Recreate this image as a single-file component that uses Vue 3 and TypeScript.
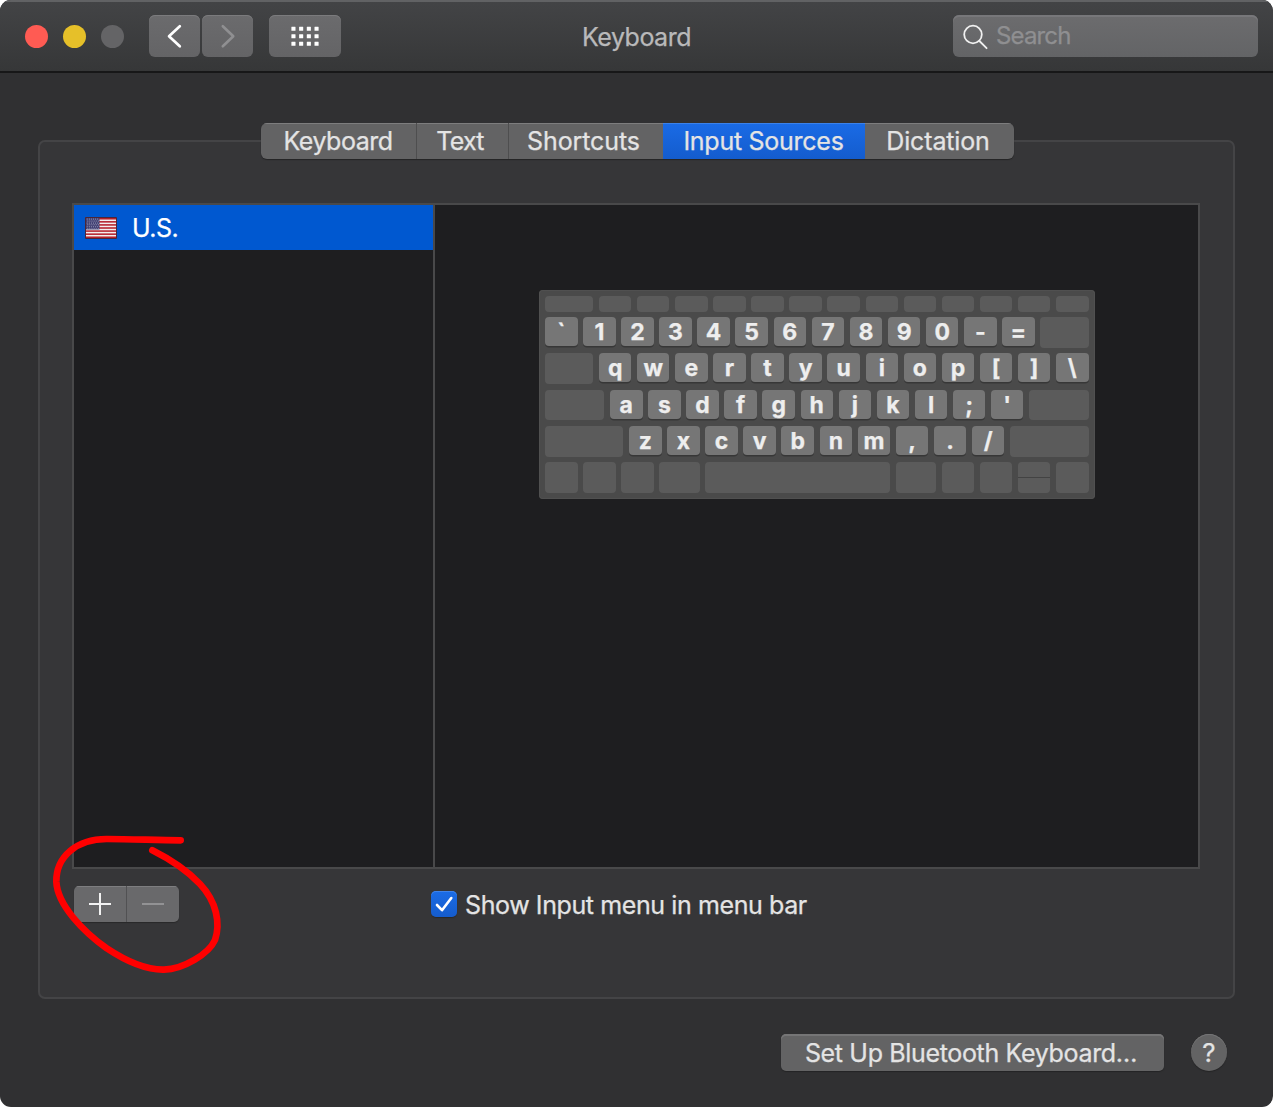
<script setup lang="ts">
interface Tab { label: string; width: number; spacing: number; active?: boolean }
interface Key { label?: string; width?: number; fill?: boolean; split?: boolean }

const tabs: Tab[] = [
  { label: 'Keyboard', width: 155, spacing: -0.5 },
  { label: 'Text', width: 92, spacing: -0.7 },
  { label: 'Shortcuts', width: 155, spacing: -0.1 },
  { label: 'Input Sources', width: 202, spacing: -0.27, active: true },
  { label: 'Dictation', width: 149, spacing: -0.13 },
]

const chars = (s: string): Key[] => s.split('').map((label) => ({ label }))
const blanks = (n: number): Key[] => Array.from({ length: n }, () => ({}))
const fill: Key = { fill: true }

const rows: Key[][] = [
  [fill, ...blanks(13)],
  [...chars('`1234567890-='), fill],
  [fill, ...chars('qwertyuiop[]\\')],
  [fill, ...chars("asdfghjkl;'"), fill],
  [fill, ...chars('zxcvbnm,./'), fill],
  [...blanks(3), { width: 40.5 }, fill, { width: 40.5 }, ...blanks(2), { split: true }, {}],
]

const stars: { x: number; y: number }[] = []
for (let r = 0; r < 6; r++) {
  for (let c = 0; c < 6; c++) stars.push({ x: 2 + c * 2.1 + (r % 2) * 0.6, y: 1.8 + r * 1.95 })
}
</script>

<template>
  <div class="window">
    <header class="titlebar">
      <div class="lights">
        <i class="light close"></i><i class="light minimize"></i><i class="light zoom"></i>
      </div>
      <div class="nav">
        <button class="tool">
          <svg width="51" height="42" viewBox="0 0 51 42"><path d="M30.8 11.2 20 21.2 30.8 31.3" fill="none" stroke="#fff" stroke-width="2.7" stroke-linecap="round" stroke-linejoin="round" /></svg>
        </button>
        <button class="tool">
          <svg width="51" height="42" viewBox="0 0 51 42"><path d="M20.8 11.2 31.3 21.2 20.8 31.3" fill="none" stroke="#8f8f91" stroke-width="2.6" stroke-linecap="round" stroke-linejoin="round" /></svg>
        </button>
      </div>
      <button class="tool grid">
        <svg width="72" height="42" viewBox="0 0 72 42" fill="#fff">
          <template v-for="r in 3" :key="r">
            <rect v-for="c in 4" :key="c" :x="14.7 + c * 7.7" :y="4.2 + r * 7.5" width="4.1" height="4.1" rx=".4" />
          </template>
        </svg>
      </button>
      <h1 class="title">Keyboard</h1>
      <div class="search">
        <svg width="26" height="26" viewBox="0 0 26 26" fill="none" stroke="#f0f0f0" stroke-width="1.8" stroke-linecap="round"><circle cx="10" cy="10.5" r="8.8" /><path d="m16.4 17 7.2 7.2" /></svg>
        <span>Search</span>
      </div>
    </header>

    <main class="content">
      <nav class="tabs">
        <div v-for="t in tabs" :key="t.label" class="tab" :class="{ active: t.active }" :style="{ width: t.width + 'px', letterSpacing: t.spacing + 'px' }"><span>{{ t.label }}</span></div>
      </nav>
      <section class="group">
        <div class="well">
          <aside class="sources">
            <div class="source">
              <svg class="flag" width="32" height="22" viewBox="0 0 32 22">
                <rect width="32" height="22" rx="1" fill="#4b2638" />
                <g transform="translate(1 1)">
                  <rect width="30" height="20" fill="#f3eeee" />
                  <rect v-for="n in 7" :key="n" x="0" :y="(n - 1) * 3.077" width="30" height="1.54" fill="#b5202c" />
                  <rect width="13.5" height="11.5" fill="#414073" />
                  <circle v-for="(s, i) in stars" :key="i" :cx="s.x - 0.8" :cy="s.y - 0.8" r=".5" fill="#b9b7cf" />
                </g>
              </svg>
              <span>U.S.</span>
            </div>
          </aside>
          <div class="preview">
            <div class="keyboard">
              <div v-for="(row, r) in rows" :key="r" class="row" :class="{ fn: r === 0 }">
                <div
                  v-for="(k, i) in row"
                  :key="i"
                  class="key"
                  :class="{ lit: k.label, fill: k.fill, split: k.split }"
                  :style="k.width ? { width: k.width + 'px' } : undefined"
                >{{ k.label }}</div>
              </div>
            </div>
          </div>
        </div>
        <div class="controls">
          <div class="addremove">
            <button><svg width="52" height="36" viewBox="0 0 52 36"><path d="M15 18h22M26 7v22" stroke="#f2f2f2" stroke-width="2" /></svg></button>
            <button><svg width="52" height="36" viewBox="0 0 52 36"><path d="M15 18h22" stroke="#929294" stroke-width="1.8" /></svg></button>
          </div>
          <label class="check">
            <svg width="26" height="26" viewBox="0 0 26 26"><path d="m6 14 5 5.2L20.3 7" fill="none" stroke="#fff" stroke-width="2.6" stroke-linecap="round" stroke-linejoin="round" /></svg>
            <span>Show Input menu in menu bar</span>
          </label>
        </div>
      </section>
    </main>

    <footer class="footer">
      <button class="setup"><span>Set Up Bluetooth Keyboard…</span></button>
      <button class="help">?</button>
    </footer>

    <svg class="scribble" width="200" height="170" viewBox="0 0 600 510">
      <path d="M422 61C350 61 280 57 200 57C110 57 48 110 49 185C52 255 130 335 200 385C260 425 320 450 372 449C430 448 506 402 525 360C542 310 530 245 480 192C440 150 385 115 337 91" />
    </svg>
  </div>
</template>

<style>
body { margin: 0; background: #fff; }
</style>

<style scoped>
.window {
  position: relative;
  box-sizing: border-box;
  width: 1273px;
  height: 1107px;
  border-radius: 11px;
  overflow: hidden;
  background: #303032;
  color: #e4e4e4;
  font: 25px/30px Inter, "Liberation Sans", sans-serif;
  -webkit-text-stroke: 0.25px;
  display: flex;
  flex-direction: column;
}
button { font: inherit; color: inherit; border: 0; padding: 0; margin: 0; }
svg { display: block; flex: none; }
span { white-space: nowrap; }
.titlebar {
  box-sizing: border-box;
  height: 73px;
  display: flex;
  align-items: center;
  padding: 0 15px 0 25px;
  background: linear-gradient(#434446, #363738);
  border-bottom: 2px solid #171718;
  box-shadow: inset 0 2px #616264;
}
.lights { display: flex; gap: 15px; width: 124px; padding-top: 1px; }
.light { width: 23px; height: 23px; border-radius: 50%; }
.close { background: #ff5b53; }
.minimize { background: #e6c029; }
.zoom { background: #646466; }
.nav { display: flex; gap: 2px; width: 120px; }
.tool {
  height: 42px;
  border-radius: 6px;
  background: linear-gradient(#6b6b6d, #646466);
  box-shadow: inset 0 1px #7b7b7d;
}
.title { margin: 3px 0 0 241px; width: 371px; font-size: 25px; font-weight: 400; color: #b9b9ba; letter-spacing: -0.5px; }
.search {
  box-sizing: border-box;
  width: 305px;
  height: 42px;
  border-radius: 6px;
  display: flex;
  align-items: center;
  gap: 8px;
  padding: 2px 0 0 10px;
  color: #8f8f91;
  background: linear-gradient(#6c6c6e, #636466);
  box-shadow: inset 0 2px #77777a;
}
.search span { margin: -2px 0 0 -1px; font-size: 24px; letter-spacing: -0.85px; }
.content { display: flex; flex-direction: column; align-items: center; padding: 50px 38px 0; }
.tabs {
  display: flex;
  height: 36px;
  margin-left: 2px;
  z-index: 1;
  border-radius: 6px;
  overflow: hidden;
  background: #636364;
  box-shadow: 0 1px 1px #242425;
}
.tab {
  box-sizing: border-box;
  display: flex;
  justify-content: center;
  align-items: center;
  padding: 0 1px 1px 0;
  box-shadow: inset 0 1px #7d7d7e;
}
.tab:last-child { padding-right: 3px; }
.tab + .tab:not(.active):not(:last-child) { border-left: 1px solid #4e4e4f; padding-right: 5px; }
.active { background: linear-gradient(#1a6be6, #145ccd); box-shadow: inset 0 1px #3b82ea; }
.group {
  box-sizing: border-box;
  align-self: stretch;
  height: 859px;
  margin-top: -19px;
  padding: 61px 33px 0 32px;
  border: 2px solid #444446;
  border-radius: 7px;
  background: #363638;
}
.well {
  box-sizing: border-box;
  height: 666px;
  display: flex;
  background: #1e1e20;
  border: 2px solid #49494a;
}
.sources { box-sizing: border-box; width: 361px; border-right: 2px solid #49494a; }
.source { display: flex; align-items: center; height: 45px; padding-left: 11px; gap: 15px; background: #0058d0; color: #fff; letter-spacing: -0.5px; }
.preview { flex: 1; display: flex; justify-content: center; align-items: flex-start; padding-top: 85px; }
.keyboard {
  box-sizing: border-box;
  width: 556px;
  height: 209px;
  padding: 6px 6px 6px 6.5px;
  border-radius: 4px;
  background: #4a4a4a;
  box-shadow: inset 0 0 0 1px #505050;
  display: flex;
  flex-direction: column;
  gap: 5.5px;
}
.row { display: flex; gap: 5.6px; height: 30.8px; }
.row.fn { height: 15.5px; }
.key { width: 32.5px; border-radius: 4px; background: #5b5b5b; box-sizing: border-box; flex: none; }
.key.fill { flex: 1; }
.key.lit {
  height: 29px;
  background: #767676;
  color: #eee;
  font-weight: 700;
  font-size: 23px;
  line-height: 30px;
  text-align: center;
  box-shadow: 0 1.5px #373737;
}
.key.split { background: linear-gradient(#5b5b5b 14.5px, #434343 14.5px, #434343 16px, #5b5b5b 16px); }
.controls { display: flex; padding: 17px 0 0 2px; align-items: center; }
.addremove { display: flex; width: 105px; height: 36px; border-radius: 5px; overflow: hidden; background: #69696b; box-shadow: 0 1px 1px #29292a; }
.addremove button { background: none; box-shadow: inset 0 1px #7e7e80; }
.addremove button + button { border-left: 1px solid #515153; }
.check { display: flex; align-items: center; gap: 8px; margin-left: 252px; letter-spacing: -0.4px; }
.check svg { border-radius: 5px; background: linear-gradient(#1b6ce6, #155ccc); box-shadow: inset 0 1px #3e83ea, 0 1px 1px #29292a; }
.check span { padding-top: 2px; }
.footer { display: flex; justify-content: flex-end; padding: 35px 46px 0 0; gap: 27px; }
.setup { width: 383px; height: 37px; padding-right: 3px; border-radius: 5px; background: #636364; letter-spacing: -0.34px; box-shadow: inset 0 2px #757576, 0 1px 1px #242425; }
.help { width: 36px; height: 37px; border-radius: 50%; background: #636364; font-size: 26px; box-shadow: inset 0 1px #757576, 0 1px 1px #242425; }
.scribble { position: absolute; left: 40px; top: 820px; }
.scribble path { fill: none; stroke: #f00; stroke-width: 20; stroke-linecap: round; }
</style>
